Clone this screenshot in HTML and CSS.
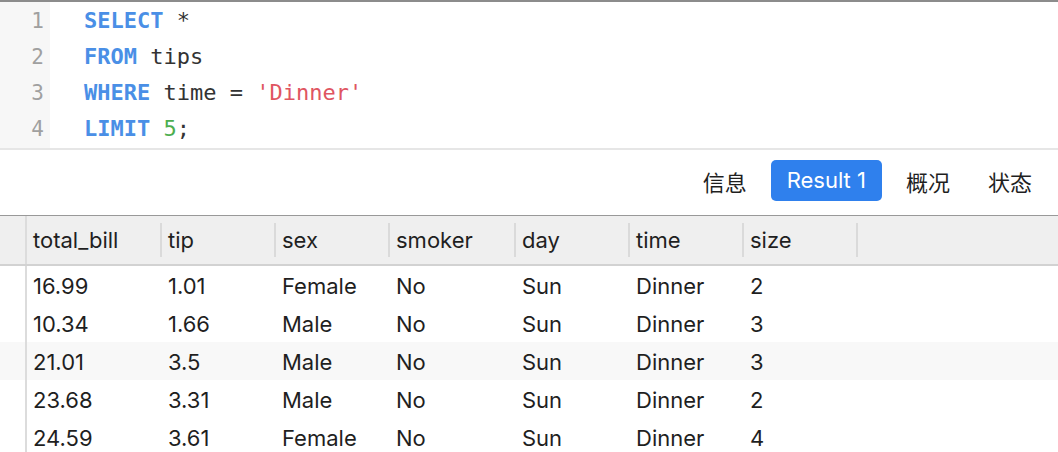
FILE: index.html
```html
<!DOCTYPE html>
<html lang="zh">
<head>
<meta charset="utf-8">
<title>Query</title>
<link rel="stylesheet" href="styles.css">
</head>
<body>
<div class="app">
  <section class="editor">
    <div class="gutter">
      <div class="ln">1</div>
      <div class="ln">2</div>
      <div class="ln">3</div>
      <div class="ln">4</div>
    </div>
    <div class="code">
      <div class="line"><span class="kw">SELECT</span> *</div>
      <div class="line"><span class="kw">FROM</span> tips</div>
      <div class="line"><span class="kw">WHERE</span> time = <span class="str">'Dinner'</span></div>
      <div class="line"><span class="kw">LIMIT</span> <span class="num">5</span>;</div>
    </div>
  </section>

  <nav class="tabs">
    <span class="tab">信息</span>
    <span class="tab active">Result 1</span>
    <span class="tab">概况</span>
    <span class="tab">状态</span>
  </nav>

  <section class="grid">
    <div class="row head">
      <div class="idx"></div>
      <div class="hc">total_bill</div>
      <div class="hc">tip</div>
      <div class="hc">sex</div>
      <div class="hc">smoker</div>
      <div class="hc">day</div>
      <div class="hc">time</div>
      <div class="hc">size</div>
      <div class="fill"></div>
    </div>
    <div class="row">
      <div class="idx"></div>
      <div class="c">16.99</div><div class="c">1.01</div><div class="c">Female</div><div class="c">No</div><div class="c">Sun</div><div class="c">Dinner</div><div class="c">2</div><div class="fill"></div>
    </div>
    <div class="row">
      <div class="idx"></div>
      <div class="c">10.34</div><div class="c">1.66</div><div class="c">Male</div><div class="c">No</div><div class="c">Sun</div><div class="c">Dinner</div><div class="c">3</div><div class="fill"></div>
    </div>
    <div class="row alt">
      <div class="idx"></div>
      <div class="c">21.01</div><div class="c">3.5</div><div class="c">Male</div><div class="c">No</div><div class="c">Sun</div><div class="c">Dinner</div><div class="c">3</div><div class="fill"></div>
    </div>
    <div class="row">
      <div class="idx"></div>
      <div class="c">23.68</div><div class="c">3.31</div><div class="c">Male</div><div class="c">No</div><div class="c">Sun</div><div class="c">Dinner</div><div class="c">2</div><div class="fill"></div>
    </div>
    <div class="row">
      <div class="idx"></div>
      <div class="c">24.59</div><div class="c">3.61</div><div class="c">Female</div><div class="c">No</div><div class="c">Sun</div><div class="c">Dinner</div><div class="c">4</div><div class="fill"></div>
    </div>
  </section>
</div>
</body>
</html>
```

FILE: styles.css
```css
* { box-sizing: border-box; }
html, body { margin: 0; padding: 0; background: #fff; }
body {
  width: 1058px;
  height: 452px;
  overflow: hidden;
  font-family: Inter, "Noto Sans CJK SC", sans-serif;
  color: #1f1f1f;
}
.app { display: flex; flex-direction: column; }

.editor {
  display: flex;
  border-top: 2px solid #8c8c8c;
  border-bottom: 2px solid #e6e6e6;
  height: 150px;
}
.gutter {
  width: 50px;
  background: #f7f7f7;
  padding-right: 6px;
  padding-top: 1px;
  font-family: "DejaVu Sans Mono", monospace;
  font-size: 21px;
  color: #a0a0a0;
  text-align: right;
}
.ln, .line { height: 36px; line-height: 36px; }
.code {
  padding-left: 34px;
  padding-top: 1px;
  font-family: "DejaVu Sans Mono", monospace;
  font-size: 22px;
  color: #333;
}
.kw { color: #4a8fe6; font-weight: bold; }
.str { color: #e05561; }
.num { color: #4cae4f; }

.tabs {
  height: 66px;
  display: flex;
  align-items: center;
  justify-content: flex-end;
  padding-right: 26px;
  padding-bottom: 4px;
  border-bottom: 1px solid #999;
  font-size: 22px;
}
.tab { color: #1f1f1f; margin-left: 38px; }
.tab.active {
  background: #2f80ed;
  color: #fff;
  border-radius: 5px;
  height: 41px;
  line-height: 41px;
  padding: 0 16px;
  margin-left: 24px;
  margin-right: -14px;
}

.grid { display: flex; flex-direction: column; }
.row {
  display: grid;
  grid-template-columns: 27px 135px 114px 114px 126px 114px 114px 114px 1fr;
  height: 38px;
  align-items: center;
  font-size: 22px;
}
.row.alt { background: #f8f8f8; }
.row.head {
  height: 50px;
  background: #efefef;
  border-bottom: 2px solid #d2d2d2;
}
.idx { height: 100%; border-right: 2px solid #dcdcdc; }
.hc {
  height: 34px;
  line-height: 34px;
  padding-left: 6px;
  border-right: 2px solid #dadada;
}
.c { padding-left: 6px; padding-top: 1px; }
.fill { height: 100%; }
```
